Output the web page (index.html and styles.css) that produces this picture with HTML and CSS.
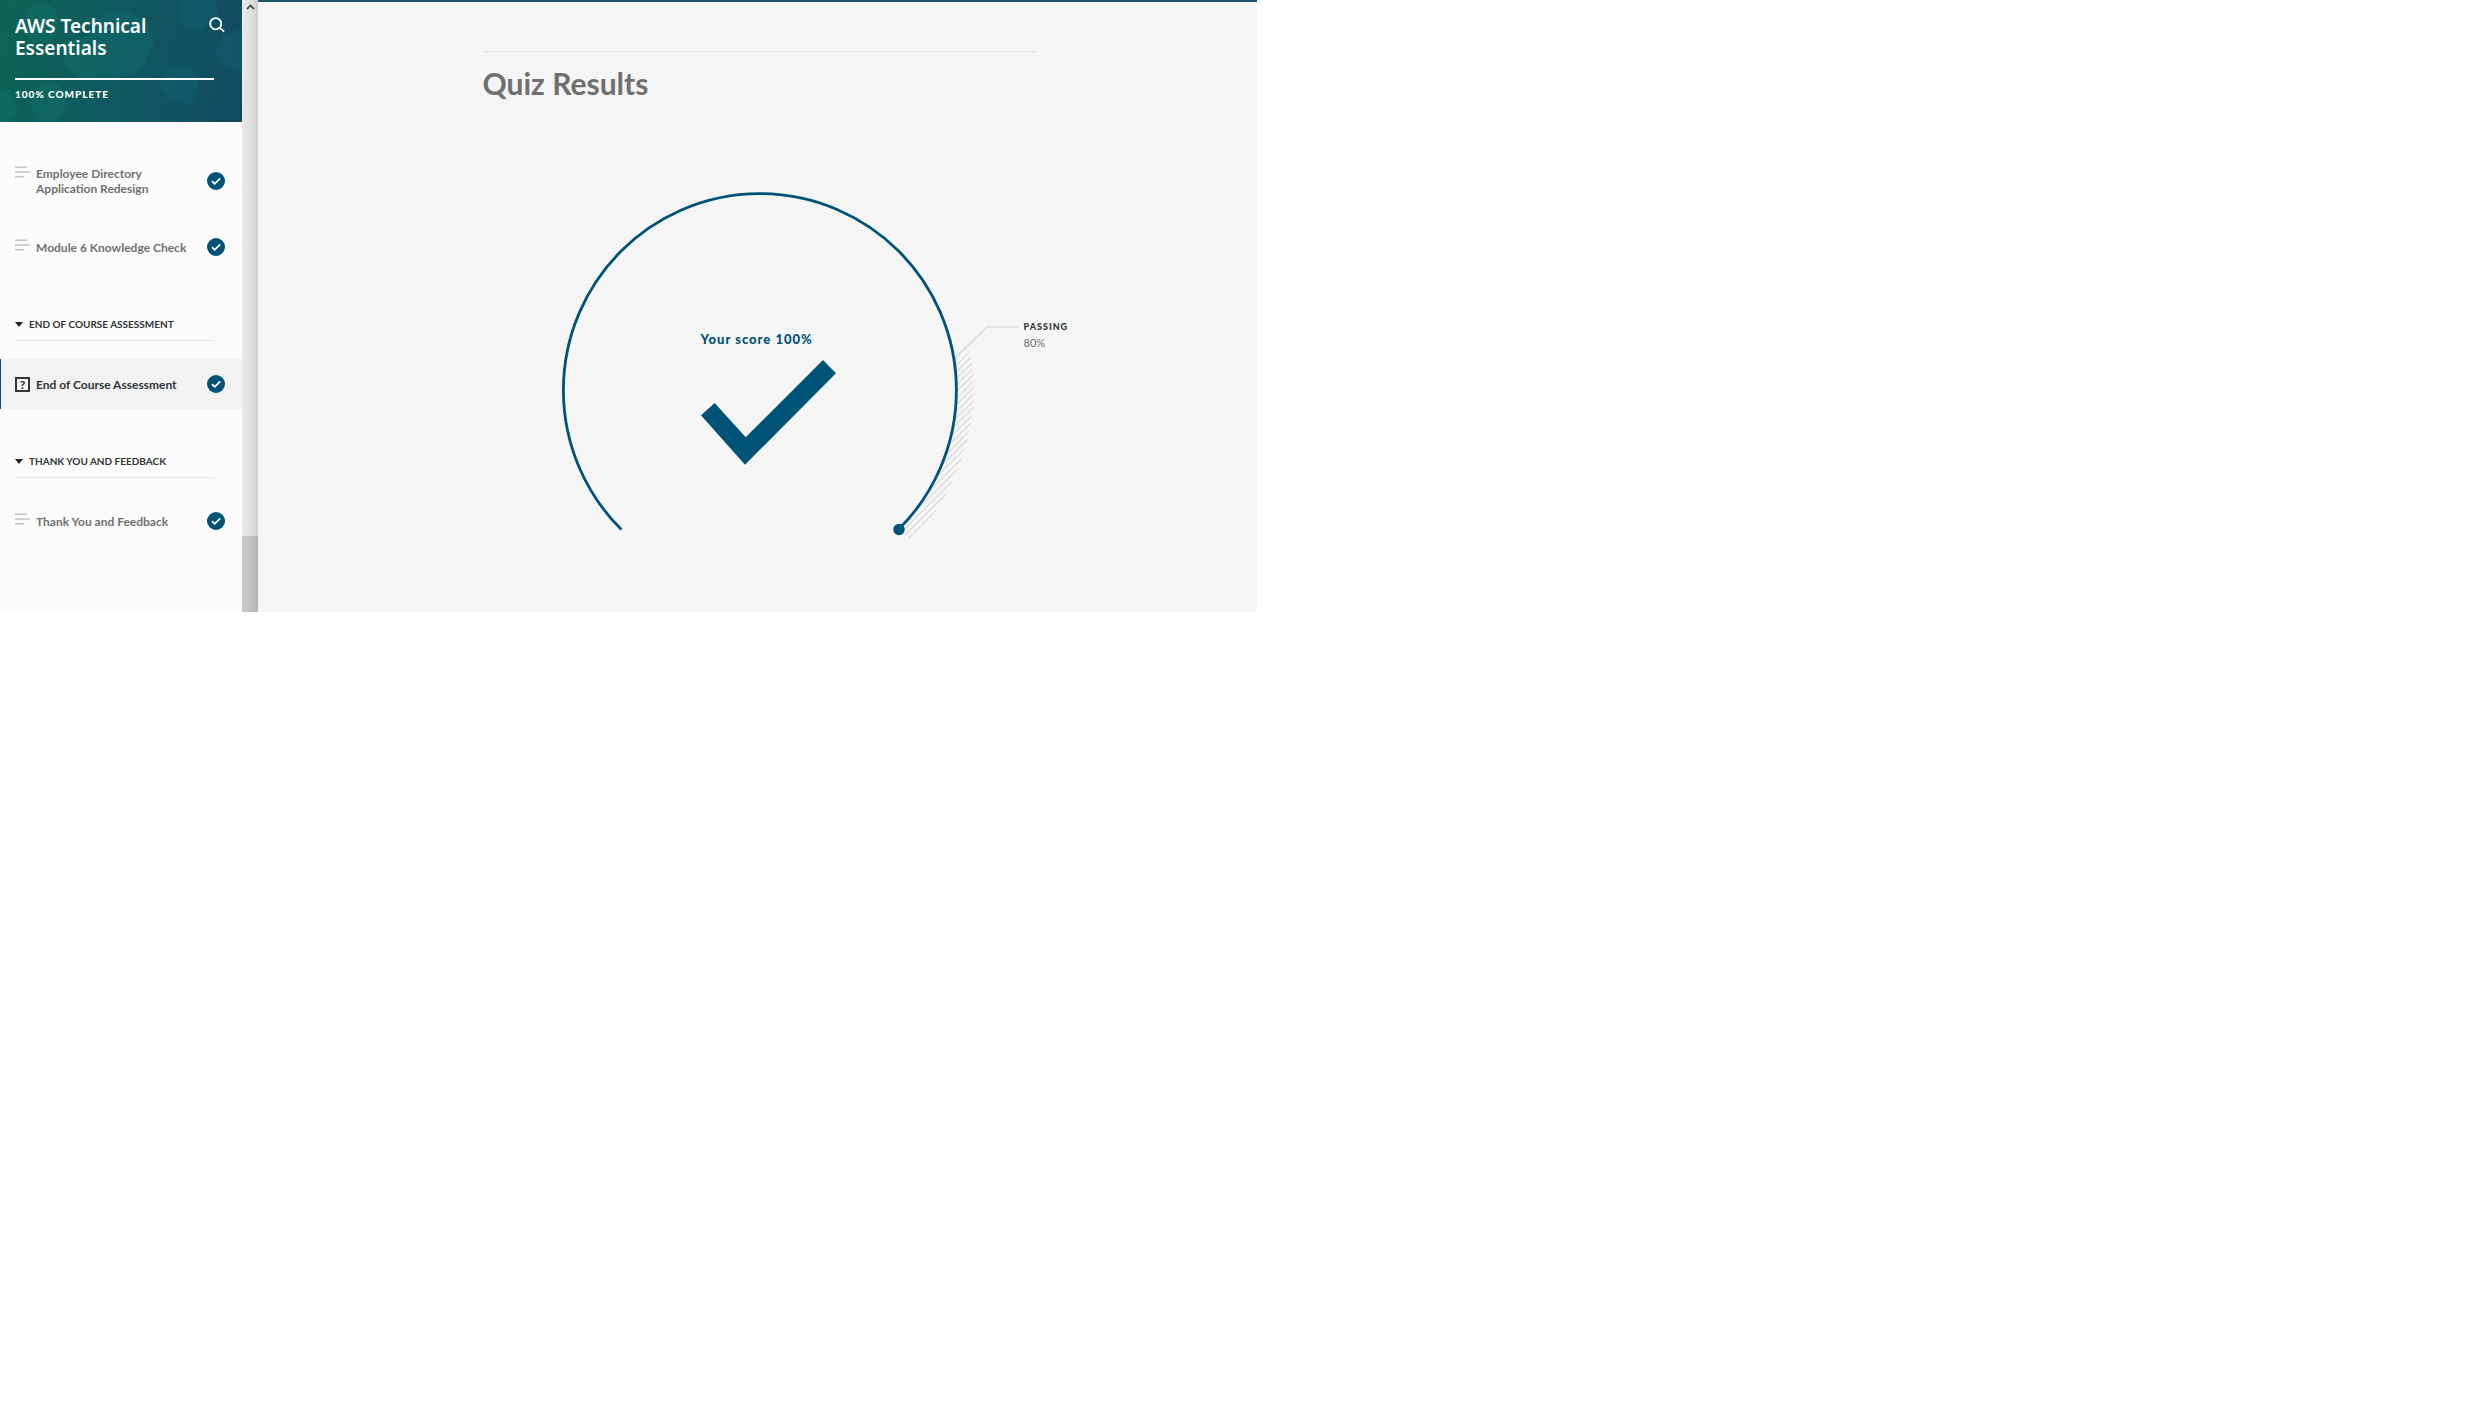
FILE: index.html
```html
<!DOCTYPE html>
<html lang="en">
<head>
<meta charset="utf-8">
<title>AWS Technical Essentials</title>
<link rel="stylesheet" href="styles.css">
</head>
<body>
<svg class="sprite" aria-hidden="true">
  <symbol id="lines" viewBox="0 0 15 12">
    <path d="M0 1.2h12M0 6h15M0 10.8h9" fill="none" stroke="currentColor" stroke-width="1.5"/>
  </symbol>
  <symbol id="done" viewBox="0 0 18 18">
    <circle cx="9" cy="9" r="9" fill="#005276"/>
    <path d="M5 9.2l2.7 2.6L13.200 6.400" fill="none" stroke="#fff" stroke-width="1.800"/>
  </symbol>
</svg>
<div class="app">
  <aside class="sidebar">
    <header class="cover">
      <svg class="cover-art" viewBox="0 0 242 121" preserveAspectRatio="none" aria-hidden="true">
        <g fill="#12857a" opacity=".2">
          <path d="M30 5l14-4 12 8 4 18-10 16-20-2-10-16z"/>
          <path d="M92 20l30-10 26 12 6 20-12 28-28 8-18-10-8-26z"/>
          <path d="M60 42l30-6 22 14 4 18-12 12H82L66 66z"/>
          <path d="M42 82l18 2 8 22-10 14H38l-8-18z"/>
          <path d="M0 88l12 2 6 20-8 11H0z"/>
        </g>
        <g fill="#1a7f96" opacity=".16">
          <path d="M168 70l12-6 18 9 1 16-9 16-24-8-8-12z"/>
          <path d="M180 0h36l3 18-20 14-20-10z"/>
          <path d="M222 36l20-8v44l-20-6-6-14z"/>
        </g>
      </svg>
      <div class="cover-body">
        <div class="cover-top">
          <h1 class="course">AWS Technical Essentials</h1>
          <button class="search" type="button" aria-label="Search">
            <svg viewBox="0 0 16 16" fill="none" stroke="#fff" stroke-width="1.800"><circle cx="6.700" cy="6.700" r="5.600"/><path d="M10.600 10.600l4.500 4.100"/></svg>
          </button>
        </div>
        <div class="progress"></div>
        <p class="complete">100% COMPLETE</p>
      </div>
    </header>
    <nav class="outline">
      <ul class="lessons">
        <li><a class="lesson" href="#"><svg class="kind"><use href="#lines"/></svg><span class="name">Employee Directory Application Redesign</span><svg class="done"><use href="#done"/></svg></a></li>
        <li><a class="lesson" href="#"><svg class="kind"><use href="#lines"/></svg><span class="name">Module 6 Knowledge Check</span><svg class="done"><use href="#done"/></svg></a></li>
      </ul>
      <h2 class="section"><button class="toggle" type="button"><span class="caret"></span>END OF COURSE ASSESSMENT</button></h2>
      <ul class="lessons">
        <li><a class="lesson current" href="#" aria-current="page"><span class="quiz">?</span><span class="name">End of Course Assessment</span><svg class="done"><use href="#done"/></svg></a></li>
      </ul>
      <h2 class="section"><button class="toggle" type="button"><span class="caret"></span>THANK YOU AND FEEDBACK</button></h2>
      <ul class="lessons">
        <li><a class="lesson" href="#"><svg class="kind"><use href="#lines"/></svg><span class="name">Thank You and Feedback</span><svg class="done"><use href="#done"/></svg></a></li>
      </ul>
    </nav>
  </aside>
  <div class="scrollbar">
    <svg class="arrow" viewBox="0 0 9 6"><path d="M.8 5.200L4.500 1.500l3.700 3.700" fill="none" stroke="#555" stroke-width="1.800"/></svg>
    <div class="thumb"></div>
  </div>
  <main class="main">
    <section class="results">
      <h2 class="title">Quiz Results</h2>
      <div class="gauge">
        <svg class="dial" viewBox="-200 -200 400 400" aria-hidden="true">
          <defs>
            <pattern id="hatch" x="120.900" y="0" width="4.645" height="10" patternUnits="userSpaceOnUse" patternTransform="rotate(45)">
              <rect width="1" height="10" fill="#d3d3d3"/>
            </pattern>
          </defs>
          <path d="M194-31L210-38A213 213 0 0 1 150.600 150.600L138.600 138.600A196 196 0 0 0 194-31Z" fill="url(#hatch)"/>
          <path d="M195-32L227-63H259" fill="none" stroke="#d3d3d3" stroke-width="1.200"/>
          <path d="M-138.600 139.600A196.500 196.500 0 1 1 139 139" fill="none" stroke="#005276" stroke-width="2.800"/>
          <circle cx="139" cy="139.500" r="5.700" fill="#005276"/>
        </svg>
        <div class="score">
          <p class="score-text">Your score 100%</p>
          <svg class="score-check" viewBox="0 0 135 105" aria-hidden="true"><path d="M122 0l13 13.300L44 104.700 0 55.300 13.700 43l31 34.300z" fill="#005276"/></svg>
        </div>
        <dl class="passing"><dt>PASSING</dt><dd>80%</dd></dl>
      </div>
    </section>
  </main>
</div>
</body>
</html>
```
FILE: styles.css
```css
* { box-sizing: border-box; }
body { margin: 0; background: #fff; font-family: Lato, "Open Sans", sans-serif; }
h1, h2, p, ul, dl, dd { margin: 0; padding: 0; }
ul { list-style: none; }
button { padding: 0; border: 0; background: none; font: inherit; color: inherit; letter-spacing: inherit; cursor: pointer; }
svg { display: block; flex: none; }
.sprite { position: absolute; width: 0; height: 0; }

.app { display: flex; max-width: 1257px; background: #f5f5f5; }
.sidebar { flex: 0 0 242px; background: #fbfbfb; }

.cover { position: relative; background: linear-gradient(100deg, #0c6455 0%, #0f5a60 45%, #114a60 100%); color: #fff; }
.cover-art { position: absolute; inset: 0; width: 100%; height: 100%; }
.cover-body { position: relative; padding: 15px 17px 20px 15px; }
.cover-top { display: flex; justify-content: space-between; align-items: flex-start; }
.course { width: 150px; font: 600 19px/22px "Noto Sans", sans-serif; }
.search { width: 16px; height: 16px; margin-top: 2px; }
.progress { height: 2px; margin: 19px 11px 0 0; background: #fff; }
.complete { margin-top: 6px; font-size: 10px; line-height: 16px; font-weight: 900; letter-spacing: 1px; }

.outline { padding: 27px 0 64px; }
.lessons { display: grid; gap: 9px; }
.lesson { display: flex; align-items: center; gap: 6px; padding: 17px 17px 17px 15px; color: #707070; font-size: 12px; line-height: 15px; font-weight: 700; text-decoration: none; }
.kind { width: 15px; height: 12px; align-self: flex-start; color: #c4c4c4; }
.name { flex: 1; max-width: 160px; margin-right: auto; }
.done { width: 18px; height: 18px; margin: -1px 0; }
.current { background: #f2f2f2; color: #313537; box-shadow: inset 1px 0 #005276; }
.quiz { width: 15px; height: 15px; border: 2px solid #313537; font-size: 12px; line-height: 11px; font-weight: 900; text-align: center; }

.section { margin: 44px 28px 18px 15px; padding-bottom: 8px; border-bottom: 1px solid #e6e6e6; color: #313537; font-size: 10px; line-height: 16px; font-weight: 700; }
.toggle { display: flex; align-items: center; gap: 6px; }
.caret { border: 4px solid transparent; border-top: 5px solid #222; border-bottom: 0; }

.scrollbar { flex: 0 0 16px; display: flex; flex-direction: column; justify-content: space-between; align-items: center; padding-top: 4px; background: linear-gradient(90deg, #e8e8e8, #dedede 60%, #cfcfcf); }
.arrow { width: 9px; height: 6px; }
.thumb { width: 100%; height: 76px; background: linear-gradient(90deg, #cacaca, #c0c0c0 60%, #b0b0b0); }

.main { flex: 1; padding: 49px 20px 22px 24px; border-top: 2px solid #1b5570; }
.results { max-width: 554px; margin: 0 auto; border-top: 1px solid #e2e2e2; }
.title { margin-top: 13px; color: #707070; font-size: 30px; line-height: 36px; font-weight: 700; }
.gauge { position: relative; display: grid; justify-items: center; align-items: center; width: 400px; height: 400px; margin: 89px auto 0; }
.dial { grid-area: 1 / 1; width: 100%; height: 100%; overflow: visible; }
.score { grid-area: 1 / 1; margin-bottom: -14px; margin-left: 17px; }
.score-text { margin-bottom: 11px; color: #005276; font-size: 13px; line-height: 20px; font-weight: 900; letter-spacing: 1px; }
.score-check { width: 135px; height: 105px; }
.passing { position: absolute; left: 100%; top: 129px; margin-left: 64px; font-size: 9px; line-height: 16px; }
.passing dt { color: #313537; font-weight: 900; letter-spacing: 1px; }
.passing dd { color: #707070; font-size: 11px; }
```
